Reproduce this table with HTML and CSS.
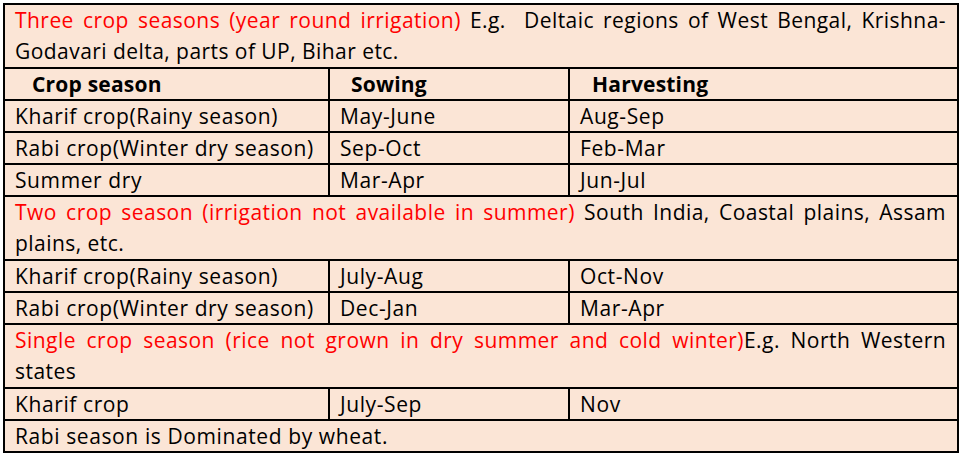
FILE: index.html
```html
<!DOCTYPE html>
<html lang="en">
<head>
<meta charset="utf-8">
<title>Crop seasons</title>
<link rel="stylesheet" href="styles.css">
</head>
<body>
<table class="crops">
  <colgroup>
    <col class="c1">
    <col class="c2">
    <col class="c3">
  </colgroup>
  <tbody>
    <tr>
      <td class="para" colspan="3">
        <span class="line full"><span class="red">Three crop seasons (year round irrigation)</span> E.g.&nbsp; Deltaic regions of West Bengal, Krishna-</span>
        <span class="line">Godavari delta, parts of UP, Bihar etc.</span>
      </td>
    </tr>
    <tr class="head">
      <td class="h1">Crop season</td>
      <td class="h2">Sowing</td>
      <td class="h3">Harvesting</td>
    </tr>
    <tr><td>Kharif crop(Rainy season)</td><td>May-June</td><td>Aug-Sep</td></tr>
    <tr><td>Rabi crop(Winter dry season)</td><td>Sep-Oct</td><td>Feb-Mar</td></tr>
    <tr><td>Summer dry</td><td>Mar-Apr</td><td>Jun-Jul</td></tr>
    <tr>
      <td class="para" colspan="3">
        <span class="line full"><span class="red">Two crop season (irrigation not available in summer)</span> South India, Coastal plains, Assam</span>
        <span class="line">plains, etc.</span>
      </td>
    </tr>
    <tr><td>Kharif crop(Rainy season)</td><td>July-Aug</td><td>Oct-Nov</td></tr>
    <tr><td>Rabi crop(Winter dry season)</td><td>Dec-Jan</td><td>Mar-Apr</td></tr>
    <tr>
      <td class="para" colspan="3">
        <span class="line full"><span class="red">Single crop season (rice not grown in dry summer and cold winter)</span>E.g. North Western</span>
        <span class="line">states</span>
      </td>
    </tr>
    <tr><td>Kharif crop</td><td>July-Sep</td><td>Nov</td></tr>
    <tr><td colspan="3">Rabi season is Dominated by wheat.</td></tr>
  </tbody>
</table>
</body>
</html>
```
FILE: styles.css
```css
html, body {
  margin: 0;
  padding: 0;
  background: #ffffff;
}

body {
  padding: 3px 0 0 3px;
}

.crops {
  border-collapse: collapse;
  table-layout: fixed;
  width: 954px;
  background: #fbe5d6;
  font-family: "Open Sans", "Noto Sans", sans-serif;
  font-size: 21px;
  letter-spacing: 0.6px;
  color: #000000;
}

.c1 { width: 325px; }
.c2 { width: 240px; }
.c3 { width: 389px; }

.crops td {
  border: 2px solid #000000;
  padding: 0 8px 0 10px;
  line-height: 30px;
  height: 30px;
  white-space: nowrap;
  vertical-align: middle;
}

.crops td.para {
  line-height: 31px;
  padding: 0 11px 0 10px;
  letter-spacing: 0.45px;
}

.line {
  display: block;
  text-align: left;
}

.line.full {
  text-align: justify;
  text-align-last: justify;
}

.red {
  color: #ff0000;
}

.head td {
  font-weight: bold;
  letter-spacing: 0.2px;
}

.head .h1 { padding-left: 27px; }
.head .h2 { padding-left: 21px; }
.head .h3 { padding-left: 22px; }
```
